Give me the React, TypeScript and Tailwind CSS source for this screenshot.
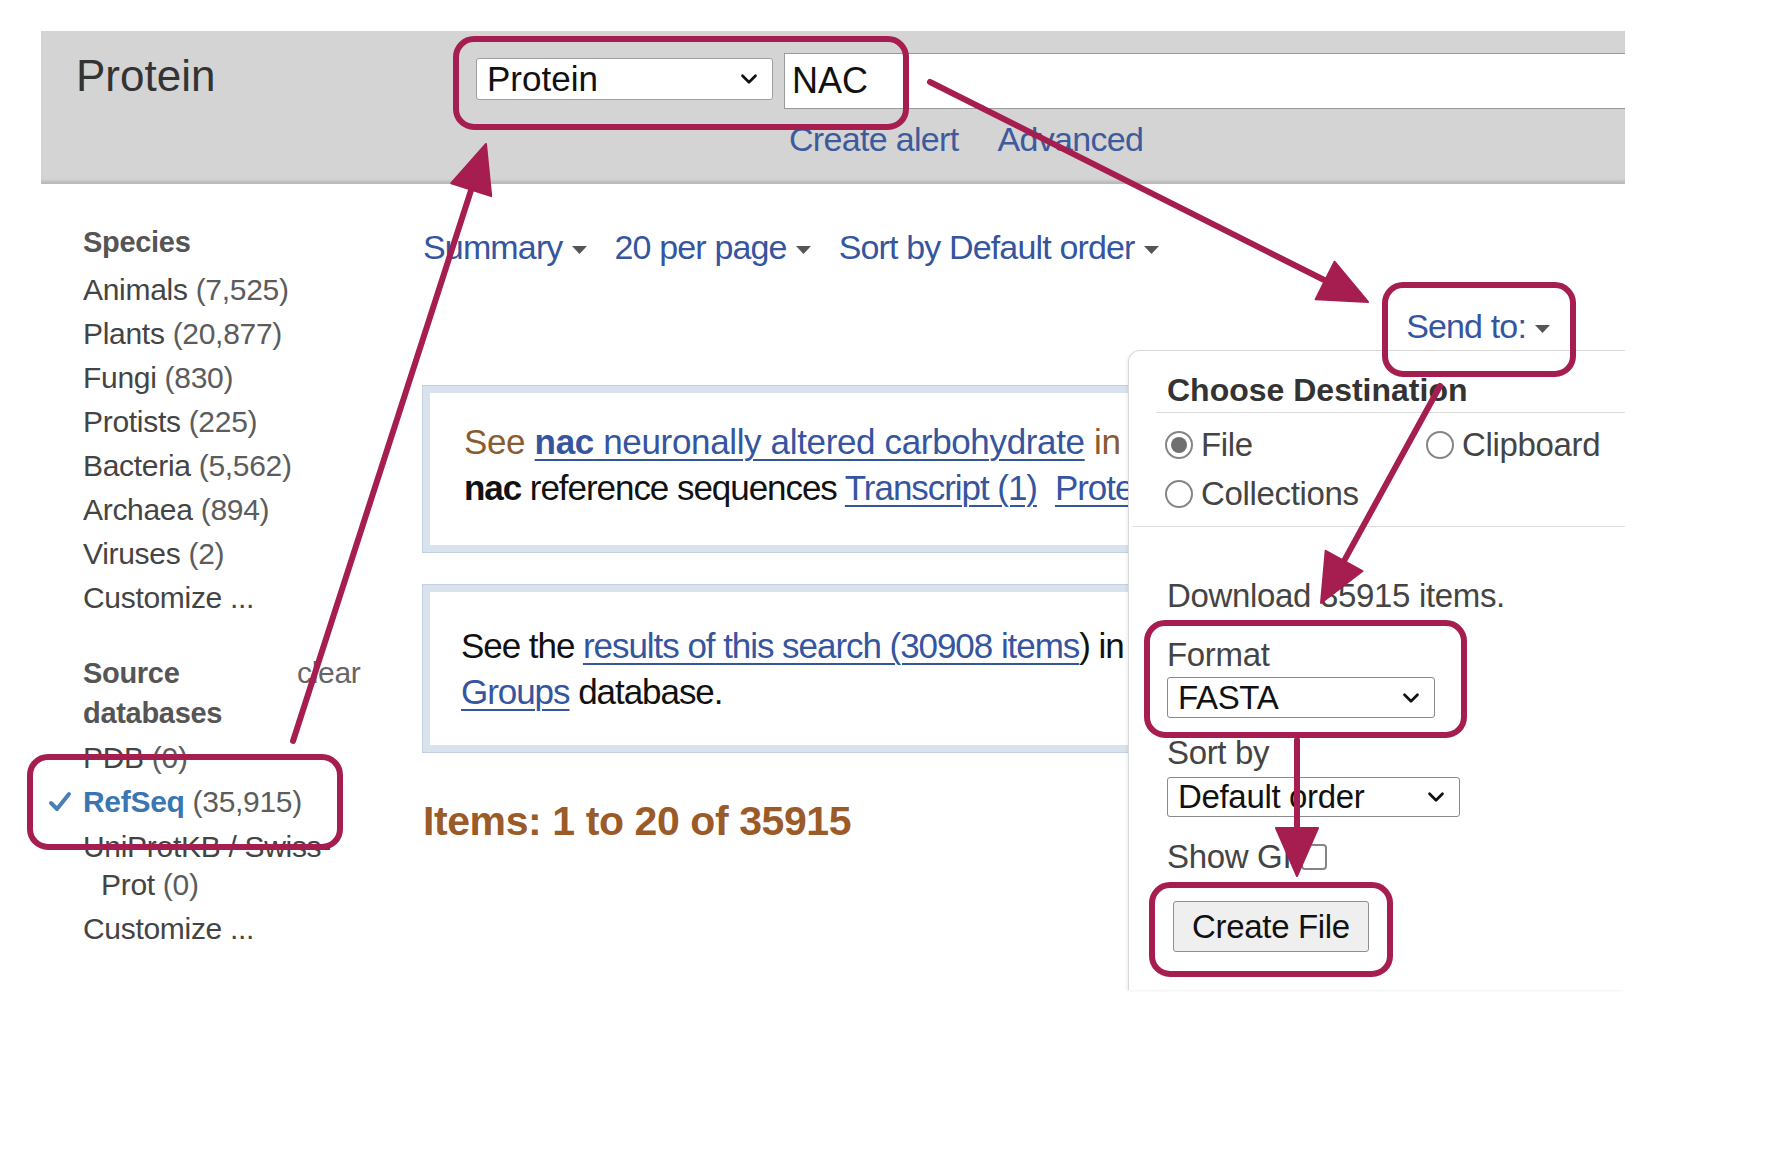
import { ChevronDown } from 'lucide-react';

const MAGENTA = '#a61d4f';

type Box = { x: number; y: number; w: number; h: number };
type Arrow = { x1: number; y1: number; x2: number; y2: number };

// callout boxes and arrows drawn over the screenshot
const boxes: Box[] = [
  { x: 456, y: 39, w: 450, h: 88 },
  { x: 1385, y: 285, w: 188, h: 89 },
  { x: 30, y: 757, w: 310, h: 90 },
  { x: 1147, y: 623, w: 317, h: 112 },
  { x: 1152, y: 885, w: 238, h: 89 },
];

const arrows: Arrow[] = [
  { x1: 293, y1: 741, x2: 486, y2: 144 },
  { x1: 930, y1: 82, x2: 1368, y2: 302 },
  { x1: 1440, y1: 386, x2: 1321, y2: 603 },
  { x1: 1297, y1: 740, x2: 1297, y2: 876 },
];

function ArrowShape({ x1, y1, x2, y2 }: Arrow) {
  const dx = x2 - x1;
  const dy = y2 - y1;
  const len = Math.hypot(dx, dy);
  const ux = dx / len;
  const uy = dy / len;
  const L = 48;
  const W = 21;
  const bx = x2 - ux * L;
  const by = y2 - uy * L;
  const px = -uy;
  const py = ux;
  const pts = `${x2},${y2} ${bx + px * W},${by + py * W} ${bx - px * W},${by - py * W}`;
  return (
    <g>
      <line x1={x1} y1={y1} x2={bx + ux * 4} y2={by + uy * 4} stroke={MAGENTA} strokeWidth={6} strokeLinecap="round" />
      <polygon points={pts} fill={MAGENTA} stroke={MAGENTA} strokeWidth={2} strokeLinejoin="round" />
    </g>
  );
}

function Annotations() {
  return (
    <svg className="absolute left-0 top-0 pointer-events-none" width={1782} height={1162}>
      {boxes.map((b, i) => (
        <rect key={i} x={b.x} y={b.y} width={b.w} height={b.h} rx={18} fill="none" stroke={MAGENTA} strokeWidth={6} />
      ))}
      {arrows.map((a, i) => (
        <ArrowShape key={i} {...a} />
      ))}
    </svg>
  );
}

function Caret() {
  return (
    <svg width="15" height="8" viewBox="0 0 15 8" className="ml-[9px] mt-[6px] shrink-0">
      <polygon points="0,0 15,0 7.5,8" fill="#555" />
    </svg>
  );
}

function Radio({ checked }: { checked?: boolean }) {
  return (
    <span className="w-[28px] h-[28px] rounded-full border-2 border-[#858585] bg-white flex items-center justify-center shrink-0">
      {checked && <span className="w-[16px] h-[16px] rounded-full bg-[#707070]" />}
    </span>
  );
}

function Facet({ name, count }: { name: string; count: string }) {
  return (
    <li className="mb-[6px]">
      <span className="text-[#444]">{name}</span> <span className="text-[#5c5c5c]">{count}</span>
    </li>
  );
}

function Sidebar() {
  return (
    <aside className="w-[340px] shrink-0 pt-[39px] text-[30px] tracking-[-0.01em]">
      <div className="leading-[38px] text-[29px] font-bold text-[#555]">Species</div>
      <ul className="mt-[10px] leading-[38px]">
        <Facet name="Animals" count="(7,525)" />
        <Facet name="Plants" count="(20,877)" />
        <Facet name="Fungi" count="(830)" />
        <Facet name="Protists" count="(225)" />
        <Facet name="Bacteria" count="(5,562)" />
        <Facet name="Archaea" count="(894)" />
        <Facet name="Viruses" count="(2)" />
        <li className="mb-[6px] text-[#444]">Customize ...</li>
      </ul>

      <div className="mt-[36px] flex leading-[40px]">
        <div className="w-[214px] text-[29px] font-bold text-[#555]">
          Source
          <br />
          databases
        </div>
        <div className="text-[#666]">clear</div>
      </div>
      <ul className="mt-[6px] leading-[38px]">
        <Facet name="PDB" count="(0)" />
        <li className="mb-[7px] -ml-[35px] flex items-center">
          <svg width="24" height="22" viewBox="0 0 24 22" className="mr-[11px]">
            <path d="M3 12 L9 18 L21 3" fill="none" stroke="#4a7fb5" strokeWidth="4" strokeLinecap="round" strokeLinejoin="round" />
          </svg>
          <span className="font-bold text-[#3a76b2]">RefSeq</span>
          <span className="ml-[8px] text-[#5c5c5c]">(35,915)</span>
        </li>
        <li className="mb-[6px] text-[#444]">
          UniProtKB / Swiss-
          <div className="pl-[18px]">
            Prot <span className="text-[#5c5c5c]">(0)</span>
          </div>
        </li>
        <li className="mb-[6px] text-[#444]">Customize ...</li>
      </ul>
    </aside>
  );
}

function Results() {
  const link = 'text-[#35559f]';
  const under = 'underline decoration-2 underline-offset-[5px]';
  return (
    <main className="w-[1202px] shrink-0">
      <div className={`pt-[43px] flex items-center leading-[40px] text-[34px] tracking-[-0.025em] ${link}`}>
        <span>Summary</span>
        <Caret />
        <span className="ml-[28px]">20 per page</span>
        <Caret />
        <span className="ml-[28px]">Sort by Default order</span>
        <Caret />
      </div>

      <div className={`mt-[39px] pr-[75px] flex items-center justify-end leading-[40px] text-[34px] tracking-[-0.025em] ${link}`}>
        <span>Send to:</span>
        <Caret />
      </div>

      {/* right part of both boxes sits under the Send to panel */}
      <div className="mt-[40px] w-[706px] h-[166px] border-[7px] border-r-0 border-[#d9e3ee] shadow-[0_0_0_1px_#c2d0e1] bg-white pl-[34px] pt-[26px] text-[35px] leading-[46px] tracking-[-0.01em] whitespace-nowrap overflow-hidden">
        <div className="text-[#8a5a30]">
          See{' '}
          <span className={`${link} ${under}`}>
            <b>nac</b> neuronally altered carbohydrate
          </span>{' '}
          in
        </div>
        <div className="text-[#111] tracking-[-0.03em]">
          <b>nac</b> reference sequences <span className={`${link} ${under}`}>Transcript (1)</span>
          <span className={`ml-[18px] ${link} ${under}`}>Prote</span>
        </div>
      </div>

      <div className="mt-[33px] w-[706px] h-[167px] border-[7px] border-r-0 border-[#d9e3ee] shadow-[0_0_0_1px_#c2d0e1] bg-white pl-[31px] pt-[31px] text-[35px] leading-[46px] tracking-[-0.03em] text-[#111] whitespace-nowrap overflow-hidden">
        <div>
          See the <span className={`${link} ${under}`}>results of this search (30908 items</span>) in
        </div>
        <div>
          <span className={`${link} ${under}`}>Groups</span> database.
        </div>
      </div>

      <div className="mt-[45px] leading-[48px] text-[41px] font-bold tracking-[-0.01em] text-[#9a5b28]">
        Items: 1 to 20 of 35915
      </div>
    </main>
  );
}

function SendToPanel() {
  return (
    <div className="absolute left-[1128px] top-[350px] w-[497px] h-[640px] bg-white rounded-tl-[12px] border-l border-t border-[#d9d9d9] shadow-[-2px_1px_3px_rgba(0,0,0,0.05)] pl-[38px] pt-[19px] text-[33px] tracking-[-0.01em] text-[#444]">
      <div className="leading-[40px] text-[32px] font-bold tracking-normal text-[#333]">Choose Destination</div>
      <div className="-ml-[11px] mt-[2px] h-px bg-[#dcdcdc]" />

      <div className="mt-[14px] -ml-[2px] grid grid-cols-[261px_1fr] gap-y-[13px] leading-[36px]">
        <label className="flex items-center gap-[8px]">
          <Radio checked />
          File
        </label>
        <label className="flex items-center gap-[8px]">
          <Radio />
          Clipboard
        </label>
        <label className="flex items-center gap-[8px]">
          <Radio />
          Collections
        </label>
      </div>
      <div className="-ml-[34px] mt-[14px] h-px bg-[#dcdcdc]" />

      <div className="mt-[49px] leading-[40px]">Download 35915 items.</div>
      <div className="mt-[19px] leading-[40px]">Format</div>
      <div className="mt-[2px] w-[268px] h-[41px] border border-[#8a8a8a] rounded-[3px] bg-white flex items-center justify-between pl-[10px] pr-[10px] text-[#111]">
        <span>FASTA</span>
        <ChevronDown size={26} strokeWidth={2.5} color="#111" />
      </div>
      <div className="mt-[15px] leading-[40px]">Sort by</div>
      <div className="mt-[4px] w-[293px] h-[40px] border border-[#8a8a8a] rounded-[3px] bg-white flex items-center justify-between pl-[10px] pr-[10px] text-[#111]">
        <span>Default order</span>
        <ChevronDown size={26} strokeWidth={2.5} color="#111" />
      </div>
      <div className="mt-[20px] leading-[40px] flex items-center">
        Show GI
        <span className="ml-[10px] w-[26px] h-[26px] rounded-[4px] border-2 border-[#858585] bg-white" />
      </div>
      <button className="mt-[24px] ml-[6px] w-[196px] h-[51px] rounded-[3px] border border-[#8f8f8f] bg-[#efefef] text-[33px] text-[#111] tracking-[-0.01em]">
        Create File
      </button>
    </div>
  );
}

export default function App() {
  return (
    <div className="relative w-[1782px] h-[1162px] bg-white overflow-hidden font-['Liberation_Sans',Arial,sans-serif]">
      <div className="pt-[31px]">
        <header className="ml-[41px] w-[1584px] h-[153px] bg-[#d4d4d4] shadow-[inset_0_-4px_3px_-1px_#b9b9b9] flex">
          <div className="w-[435px] shrink-0 pl-[35px] pt-[23px] text-[44px] leading-none text-[#333]">Protein</div>
          <div className="flex-1 flex flex-col">
            <div className="pt-[22px] flex items-start">
              <div className="mt-[5px] w-[297px] h-[42px] border border-[#a0a0a0] rounded-[3px] bg-white flex items-center justify-between pl-[10px] pr-[10px] text-[35px] text-[#111]">
                <span>Protein</span>
                <ChevronDown size={26} strokeWidth={2.5} color="#111" />
              </div>
              <div className="ml-[11px] flex-1 h-[56px] border-y border-l border-[#9a9a9a] bg-white pl-[7px] flex items-center text-[36px] text-[#111]">
                NAC
              </div>
            </div>
            <div className="mt-[10px] pl-[313px] flex leading-[40px] text-[34px] tracking-[-0.02em] text-[#3d5b9c]">
              <span>Create alert</span>
              <span className="ml-[39px]">Advanced</span>
            </div>
          </div>
        </header>

        <div className="flex pl-[83px]">
          <Sidebar />
          <Results />
        </div>
      </div>
      <SendToPanel />
      <Annotations />
    </div>
  );
}
